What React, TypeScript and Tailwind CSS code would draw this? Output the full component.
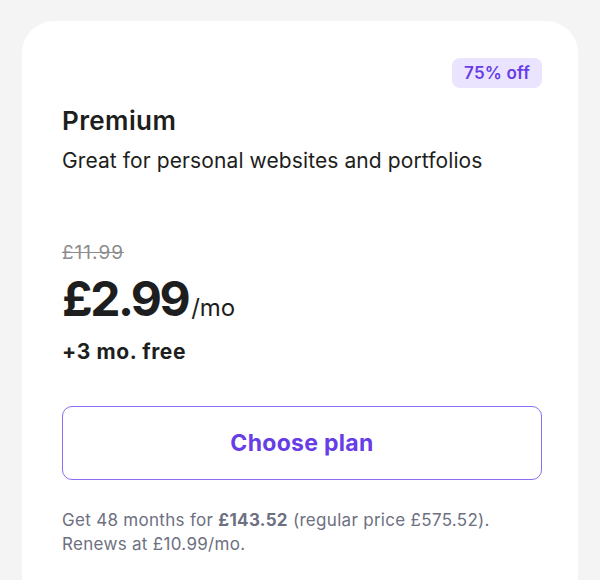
export default function App() {
  return (
    <div className="min-h-[580px] bg-[#f4f4f4] px-[22px] pt-[21px] font-['Inter',sans-serif]">
      <div className="h-[559px] rounded-t-[32px] bg-white pl-[40px] pr-[36px] pt-[37px]">
        <div className="flex justify-end">
          <span className="rounded-[8px] bg-[#ebe4ff] px-[12px] py-[4px] text-[17px] font-semibold leading-[22px] tracking-[0.2px] text-[#673de6]">
            75% off
          </span>
        </div>
        <h2 className="mt-[17px] text-[26px] font-semibold leading-[32px] tracking-[0.4px] text-[#1d1e20]">Premium</h2>
        <p className="mt-[10px] text-[21px] leading-[28px] tracking-[0.1px] text-[#1d1e20]">
          Great for personal websites and portfolios
        </p>

        <div className="mt-[66px] text-[19px] leading-[24px] tracking-[1px] text-[#8c8c8c] line-through">£11.99</div>
        <div className="mt-[8px] flex items-baseline leading-[52px] text-[#1d1e20]">
          <span className="text-[48px] font-bold leading-[52px] tracking-[-2.5px]">£2.99</span>
          <span className="ml-[3px] text-[24px] leading-[52px]">/mo</span>
        </div>
        <div className="mt-[4px] text-[21px] font-bold leading-[28px] tracking-[0.6px] text-[#1d1e20]">+3 mo. free</div>

        <button className="mt-[40px] flex h-[74px] w-full items-center justify-center rounded-[10px] border border-[#8c6cf0] bg-white text-[23px] font-bold tracking-[0.3px] text-[#673de6]">
          Choose plan
        </button>

        <p className="mt-[28px] text-[17px] leading-[24px] tracking-[0.3px] text-[#6d7081]">
          Get 48 months for <span className="font-bold">£143.52</span> (regular price £575.52).
          <br />
          Renews at £10.99/mo.
        </p>
      </div>
    </div>
  );
}
